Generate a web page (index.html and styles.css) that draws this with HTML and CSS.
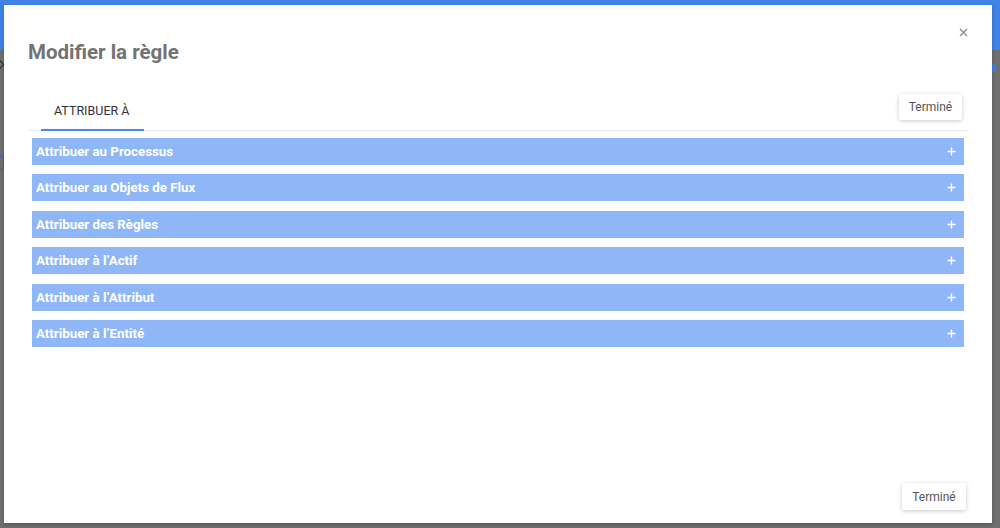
FILE: index.html
```html
<!DOCTYPE html>
<html lang="fr">
<head>
<meta charset="utf-8">
<title>Modifier la règle</title>
<link rel="stylesheet" href="styles.css">
</head>
<body>
<div class="page">
  <div class="topbar"></div>
  <div class="bg-content">
    <span class="bg-chevron"></span>
    <span class="bg-box"></span>
    <span class="bg-dot"></span>
  </div>

  <div class="dialog">
    <button class="close" aria-label="Fermer">
      <svg width="9" height="9" viewBox="0 0 9 9"><path d="M1 1L8 8M8 1L1 8" stroke="#8a8a8a" stroke-width="1.3" fill="none"/></svg>
    </button>
    <h1 class="title">Modifier la règle</h1>

    <div class="tabbar">
      <div class="tabs">
        <div class="tab active">ATTRIBUER À</div>
      </div>
      <button class="btn btn-top">Terminé</button>
    </div>

    <div class="accordion">
      <div class="acc-row"><span>Attribuer au Processus</span><svg class="plus" width="9" height="9" viewBox="0 0 9 9"><path d="M4.5 0.5V8.5M0.5 4.5H8.5" stroke="#fff" stroke-width="1.4"/></svg></div>
      <div class="acc-row"><span>Attribuer au Objets de Flux</span><svg class="plus" width="9" height="9" viewBox="0 0 9 9"><path d="M4.5 0.5V8.5M0.5 4.5H8.5" stroke="#fff" stroke-width="1.4"/></svg></div>
      <div class="acc-row"><span>Attribuer des Règles</span><svg class="plus" width="9" height="9" viewBox="0 0 9 9"><path d="M4.5 0.5V8.5M0.5 4.5H8.5" stroke="#fff" stroke-width="1.4"/></svg></div>
      <div class="acc-row"><span>Attribuer à l’Actif</span><svg class="plus" width="9" height="9" viewBox="0 0 9 9"><path d="M4.5 0.5V8.5M0.5 4.5H8.5" stroke="#fff" stroke-width="1.4"/></svg></div>
      <div class="acc-row"><span>Attribuer à l’Attribut</span><svg class="plus" width="9" height="9" viewBox="0 0 9 9"><path d="M4.5 0.5V8.5M0.5 4.5H8.5" stroke="#fff" stroke-width="1.4"/></svg></div>
      <div class="acc-row"><span>Attribuer à l’Entité</span><svg class="plus" width="9" height="9" viewBox="0 0 9 9"><path d="M4.5 0.5V8.5M0.5 4.5H8.5" stroke="#fff" stroke-width="1.4"/></svg></div>
    </div>

    <div class="footer">
      <button class="btn btn-bottom">Terminé</button>
    </div>
  </div>
</div>
</body>
</html>
```

FILE: styles.css
```css
html, body {
  margin: 0;
  padding: 0;
}
body {
  width: 1000px;
  height: 528px;
  overflow: hidden;
  background: #6f6f6f;
  font-family: Roboto, "Liberation Sans", Arial, sans-serif;
}
.page {
  position: relative;
  width: 1000px;
  height: 528px;
}
.topbar {
  height: 50px;
  background: #4182e6;
}
.bg-content {
  position: relative;
}
.bg-chevron {
  position: absolute;
  left: -4px;
  top: 11px;
  width: 6px;
  height: 6px;
  border-right: 1.5px solid #2c2c2c;
  border-bottom: 1.5px solid #2c2c2c;
  transform: rotate(-45deg);
}
.bg-box {
  position: absolute;
  left: -6px;
  top: 106px;
  width: 8px;
  height: 12px;
  border: 1.5px solid #3a64a8;
  border-radius: 2px;
}
.bg-dot {
  position: absolute;
  left: 991px;
  top: 14px;
  width: 5px;
  height: 8px;
  border-radius: 3px;
  background: #3f7fe0;
}

.dialog {
  position: absolute;
  left: 4px;
  top: 5px;
  width: 988px;
  height: 518px;
  box-sizing: border-box;
  background: #fff;
  padding: 33px 24px 0 24px;
  display: flex;
  flex-direction: column;
  box-shadow: 0 2px 4px rgba(0,0,0,0.2);
}
.close {
  position: absolute;
  right: 24px;
  top: 23px;
  width: 9px;
  height: 9px;
  padding: 0;
  border: 0;
  background: none;
  display: flex;
}
.title {
  margin: 0;
  font-size: 20.5px;
  line-height: 28px;
  font-weight: 700;
  color: #737373;
}

.tabbar {
  margin-top: 27px;
  height: 38px;
  display: flex;
  align-items: flex-start;
  justify-content: space-between;
  border-bottom: 1px solid #ebebeb;
  box-sizing: border-box;
}
.tabs {
  display: flex;
  align-self: stretch;
  padding-left: 13px;
}
.tab {
  width: 103px;
  box-sizing: border-box;
  padding-left: 13px;
  font-size: 12.5px;
  line-height: 16px;
  color: #333;
  padding-top: 10px;
  margin-bottom: -1px;
}
.tab.active {
  border-bottom: 2px solid #4a86e8;
}

.btn {
  font-family: inherit;
  font-size: 12px;
  color: #555;
  background: #fff;
  border: 0;
  border-radius: 2px;
  box-shadow: 0 1px 4px rgba(0,0,0,0.22);
  padding: 0;
  width: 63px;
  height: 26px;
  cursor: pointer;
}
.btn-top {
  margin-top: 1px;
  margin-right: 6px;
}

.accordion {
  margin: 7px 4px 0 4px;
  display: flex;
  flex-direction: column;
  gap: 9.4px;
}
.acc-row {
  height: 27px;
  background: #8fb7f8;
  display: flex;
  align-items: center;
  justify-content: space-between;
  padding: 0 8px 0 4px;
  color: #fff;
  font-size: 13.3px;
  font-weight: 700;
}
.plus {
  display: block;
}

.footer {
  margin-top: auto;
  display: flex;
  justify-content: flex-end;
  padding-bottom: 13px;
  margin-right: 2px;
}
.btn-bottom {
  width: 64px;
  height: 27px;
}
```
